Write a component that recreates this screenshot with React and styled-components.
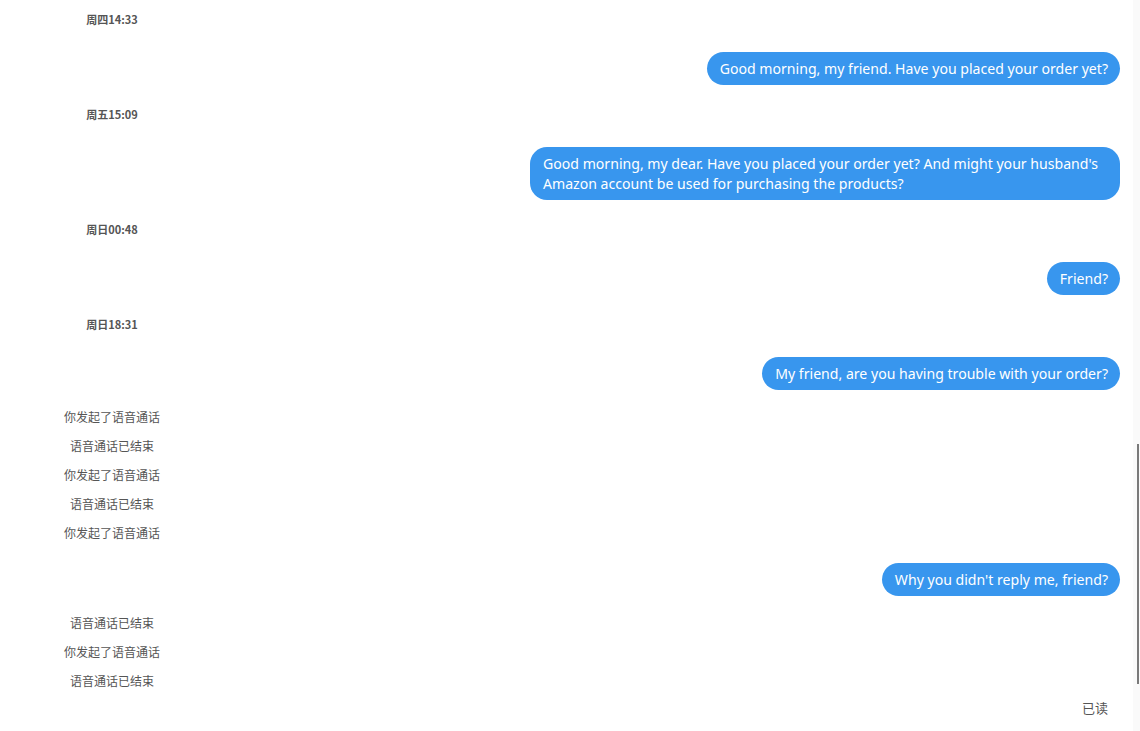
import React from "react";
import styled, { createGlobalStyle } from "styled-components";

const Global = createGlobalStyle`
  html, body { margin: 0; padding: 0; background: #fff; }
  body { font-family: "Noto Sans", "Noto Sans CJK SC", sans-serif; overflow: hidden; }
`;

const Page = styled.div`
  display: flex;
  width: 1140px;
  height: 731px;
  overflow: hidden;
  background: #fff;
`;

const Feed = styled.div`
  flex: 1;
  display: flex;
  flex-direction: column;
  margin-top: -10px;
  padding-right: 13px;
`;

const Track = styled.div`
  width: 7px;
  background: #fafafa;
  display: flex;
  flex-direction: column;
  align-items: flex-end;
  padding-top: 444px;
  box-sizing: border-box;
`;

const Thumb = styled.div`
  width: 2px;
  height: 240px;
  margin-right: 1px;
  background: #7a7a7a;
`;

const Stamp = styled.div`
  width: 224px;
  padding: 19px 0 23px;
  line-height: 20px;
  text-align: center;
  font-size: 11px;
  font-weight: 600;
  color: #555;
  font-family: "Noto Sans CJK SC", sans-serif;
`;

const SystemGroup = styled.div`
  display: flex;
  flex-direction: column;
  padding-top: 13px;
  padding-bottom: ${(p) => p.$after}px;
`;

const SystemLine = styled.div`
  width: 224px;
  height: 29px;
  line-height: 28px;
  text-align: center;
  font-size: 12px;
  color: #555;
  font-family: "Noto Sans CJK SC", sans-serif;
`;

const Row = styled.div`
  display: flex;
  justify-content: flex-end;
`;

const Bubble = styled.div`
  max-width: 565px;
  padding: 7px 12px 6px 13px;
  background: #3896ee;
  color: #fff;
  border-radius: 17px;
  font-size: 14.1px;
  line-height: 20px;
  font-family: "Noto Sans", sans-serif;
`;

const Read = styled.div`
  align-self: flex-end;
  margin-right: 12px;
  margin-top: 2px;
  line-height: 20px;
  font-size: 13px;
  color: #555;
  font-family: "Noto Sans CJK SC", sans-serif;
`;

const Message = ({ children }) => (
  <Row>
    <Bubble>{children}</Bubble>
  </Row>
);

export default function App() {
  return (
    <>
      <Global />
      <Page>
        <Feed>
          <Stamp>周四14:33</Stamp>
          <Message>Good morning, my friend. Have you placed your order yet?</Message>
          <Stamp>周五15:09</Stamp>
          <Message>
            Good morning, my dear. Have you placed your order yet? And might your husband's Amazon account be used for purchasing the products?
          </Message>
          <Stamp>周日00:48</Stamp>
          <Message>Friend?</Message>
          <Stamp>周日18:31</Stamp>
          <Message>My friend, are you having trouble with your order?</Message>
          <SystemGroup $after={15}>
            <SystemLine>你发起了语音通话</SystemLine>
            <SystemLine>语音通话已结束</SystemLine>
            <SystemLine>你发起了语音通话</SystemLine>
            <SystemLine>语音通话已结束</SystemLine>
            <SystemLine>你发起了语音通话</SystemLine>
          </SystemGroup>
          <Message>Why you didn't reply me, friend?</Message>
          <SystemGroup $after={0}>
            <SystemLine>语音通话已结束</SystemLine>
            <SystemLine>你发起了语音通话</SystemLine>
            <SystemLine>语音通话已结束</SystemLine>
          </SystemGroup>
          <Read>已读</Read>
        </Feed>
        <Track>
          <Thumb />
        </Track>
      </Page>
    </>
  );
}
